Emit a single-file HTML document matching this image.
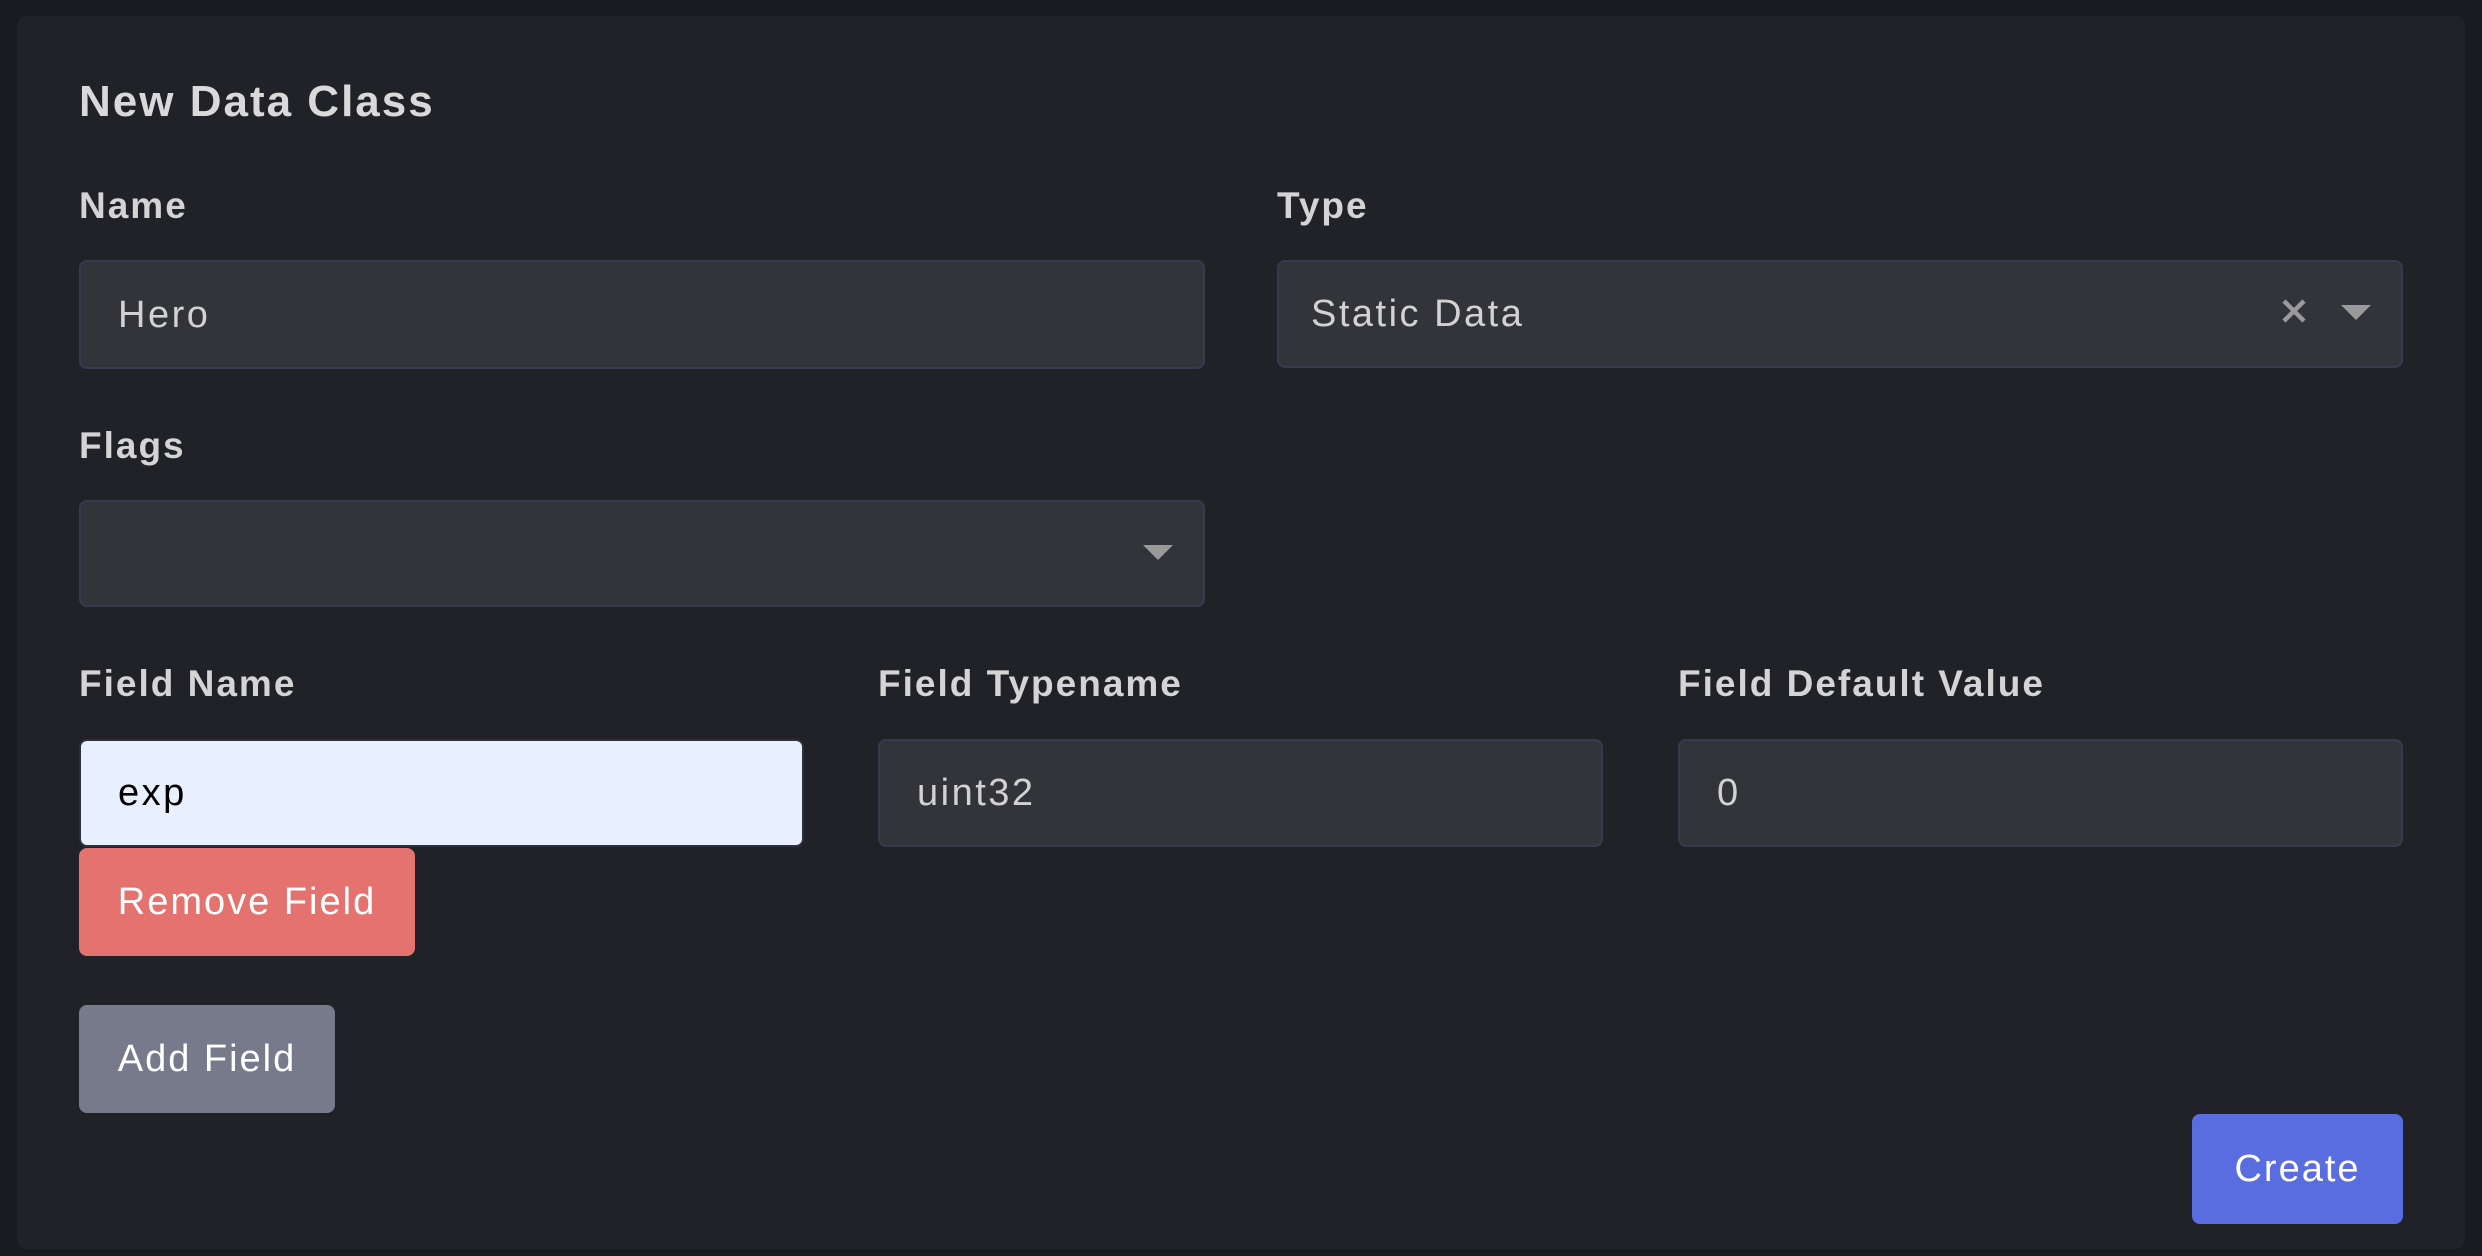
<!DOCTYPE html>
<html><head><meta charset="utf-8"><style>
html,body{margin:0;padding:0;background:#1a1b20;width:2482px;height:1256px;overflow:hidden;font-family:"Liberation Sans",sans-serif;}
.panel{position:absolute;left:17px;top:16px;width:2448px;height:1233px;background:#212227;border-radius:10px;}
.abs{position:absolute;}
.title{left:79px;top:76px;font-size:44px;font-weight:bold;color:#d9d9d9;line-height:52px;letter-spacing:2px;}
.lbl{font-size:37px;font-weight:bold;color:#d4d4d4;line-height:44px;letter-spacing:2px;}
.inp{background:#333439;border:2px solid #363b4f;border-radius:8px;box-sizing:border-box;color:#d2d2d2;font-size:38px;line-height:40px;letter-spacing:2.5px;}
.inp span{position:absolute;left:37px;top:50%;transform:translateY(-50%);}
.btn{border-radius:8px;color:#fff;font-size:38px;display:flex;align-items:center;justify-content:center;letter-spacing:2px;}
</style></head><body>
<div class="panel"></div>
<div class="abs title">New Data Class</div>
<div class="abs lbl" style="left:79px;top:184px">Name</div>
<div class="abs inp" style="left:79px;top:260px;width:1126px;height:109px"><span>Hero</span></div>
<div class="abs lbl" style="left:1277px;top:184px">Type</div>
<div class="abs inp" style="left:1277px;top:260px;width:1126px;height:108px"><span style="left:32px">Static Data</span>
<svg class="abs" style="left:1001px;top:35px" width="28" height="28" viewBox="0 0 28 28"><path d="M4 4L24 24M24 4L4 24" stroke="#9a9a9a" stroke-width="4.5"/></svg>
<svg class="abs" style="left:1062px;top:43px" width="30" height="16" viewBox="0 0 30 16"><path d="M0 0H30L15 15Z" fill="#9a9a9a"/></svg>
</div>
<div class="abs lbl" style="left:79px;top:424px">Flags</div>
<div class="abs inp" style="left:79px;top:500px;width:1126px;height:107px">
<svg class="abs" style="left:1062px;top:43px" width="30" height="16" viewBox="0 0 30 16"><path d="M0 0H30L15 15Z" fill="#9a9a9a"/></svg>
</div>
<div class="abs lbl" style="left:79px;top:662px">Field Name</div>
<div class="abs lbl" style="left:878px;top:662px">Field Typename</div>
<div class="abs lbl" style="left:1678px;top:662px">Field Default Value</div>
<div class="abs inp" style="left:79px;top:739px;width:725px;height:108px;background:#e8f0fe;border-color:#2c3142;color:#000"><span>exp</span></div>
<div class="abs inp" style="left:878px;top:739px;width:725px;height:108px"><span>uint32</span></div>
<div class="abs inp" style="left:1678px;top:739px;width:725px;height:108px"><span>0</span></div>
<div class="abs btn" style="left:79px;top:848px;width:336px;height:108px;background:#e4736f">Remove Field</div>
<div class="abs btn" style="left:79px;top:1005px;width:256px;height:108px;background:#777a8b">Add Field</div>
<div class="abs btn" style="left:2192px;top:1114px;width:211px;height:110px;background:#5a6de0">Create</div>
</body></html>
